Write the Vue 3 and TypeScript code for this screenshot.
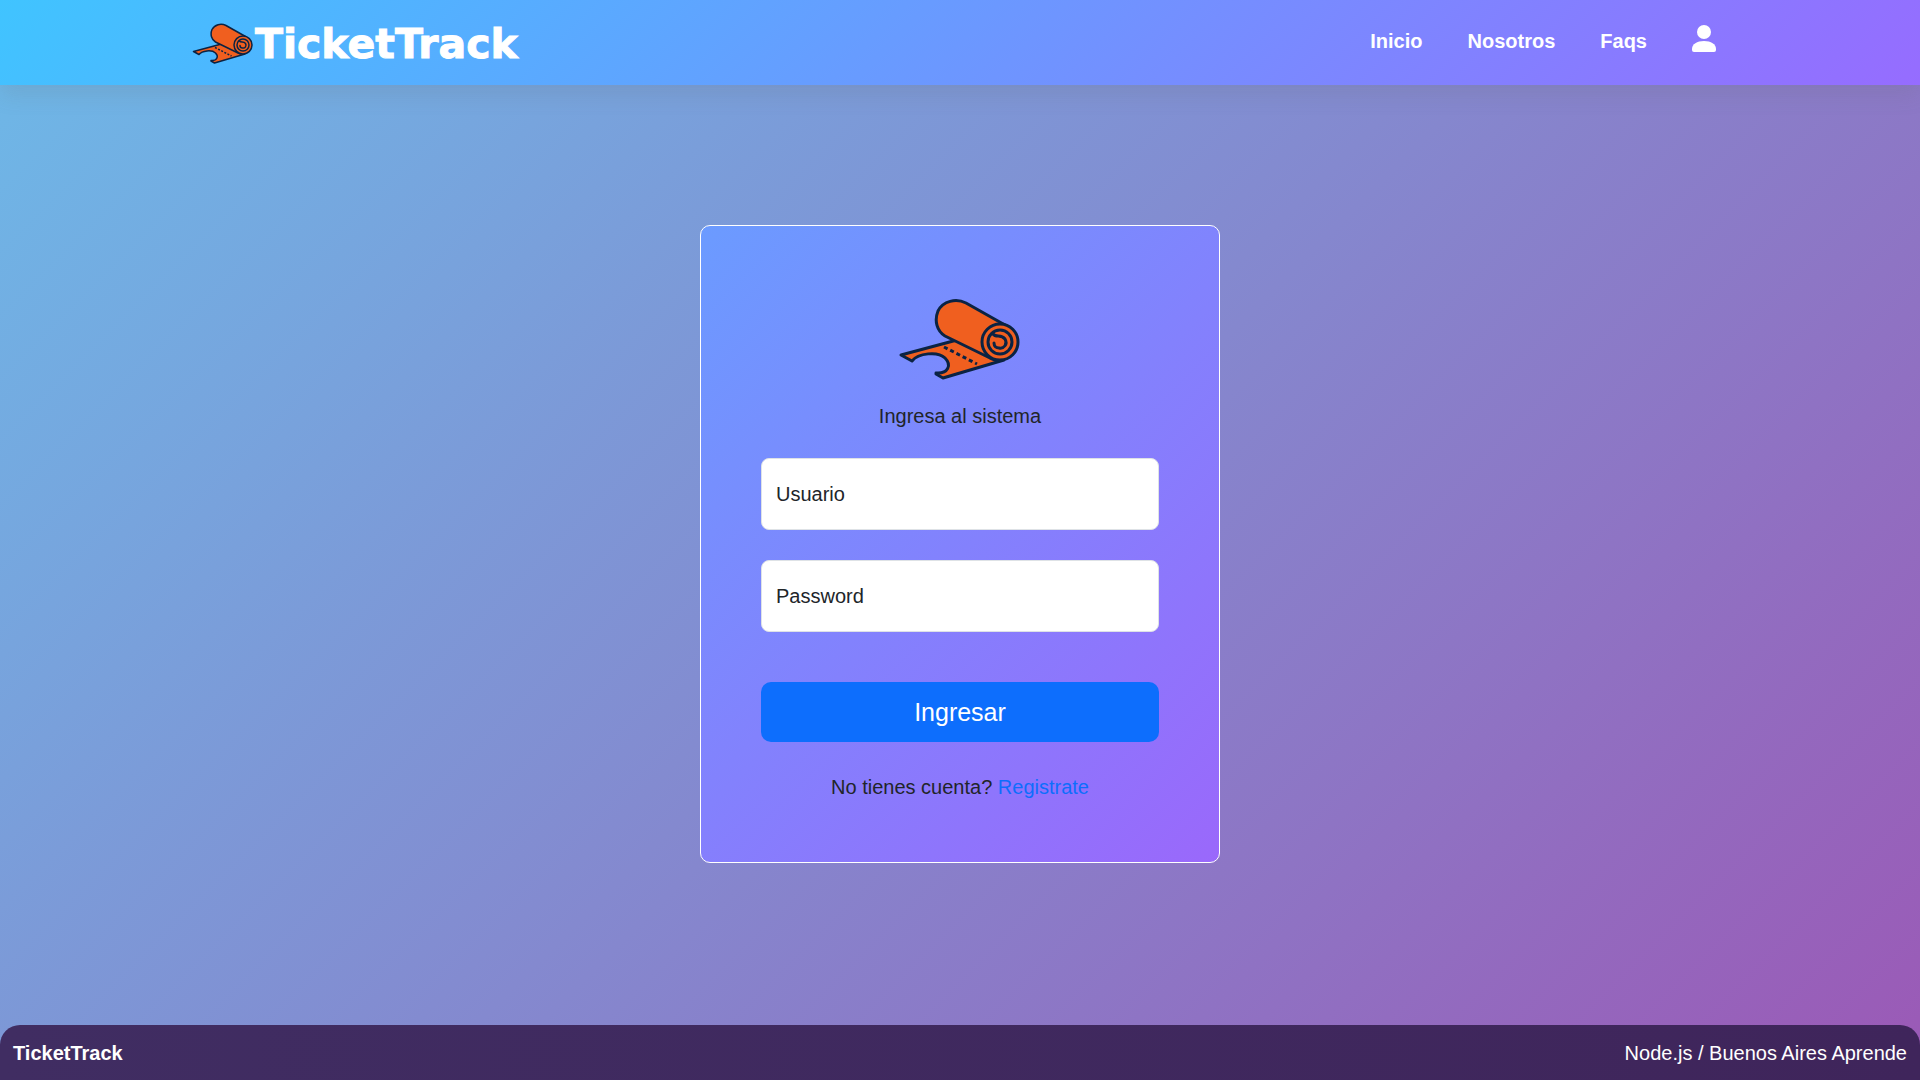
<script setup lang="ts">
import { ref } from 'vue'

interface NavLink {
  label: string
  href: string
}

interface Field {
  id: string
  label: string
  type: string
  autocomplete: string
}

const brand = 'TicketTrack'
const links: NavLink[] = [
  { label: 'Inicio', href: '#inicio' },
  { label: 'Nosotros', href: '#nosotros' },
  { label: 'Faqs', href: '#faqs' },
]
const fields: Field[] = [
  { id: 'usuario', label: 'Usuario', type: 'text', autocomplete: 'username' },
  { id: 'password', label: 'Password', type: 'password', autocomplete: 'current-password' },
]
const values = ref<Record<string, string>>({ usuario: '', password: '' })
</script>

<template>
  <div class="page">
    <svg class="symbols" aria-hidden="true">
      <symbol id="ticket-roll" viewBox="0 0 124 82">
        <g fill="#f05f1f" stroke="#0b2343" stroke-width="3" stroke-linejoin="round" stroke-linecap="round">
          <path d="M59 42 L3 57 L14 63 C20 55 40 53 47 60 C54 67 50 76 38 75 L38 76 L45 80 L106 62 Z" />
          <path d="M107 27 L68 5 C58 0 45 3 40 13 C36 23 39 33 47 38 L92 60 L97 62 Z" />
          <circle cx="102" cy="44" r="18" />
          <circle cx="102" cy="44" r="12" />
          <path fill="none" d="M95 36 C98 40 103 36 107 41 C110 46 106 51 101 50 C98 50 96 48 96 45" />
          <path fill="none" stroke-linecap="butt" stroke-dasharray="4 3" d="M46 49 L79 66" />
        </g>
      </symbol>
    </svg>

    <header class="topbar">
      <a class="brand" href="#inicio">
        <svg class="brand-mark" viewBox="0 0 124 82" aria-hidden="true"><use href="#ticket-roll" /></svg>
        <span>{{ brand }}</span>
      </a>
      <nav class="nav">
        <a v-for="link in links" :key="link.label" :href="link.href">{{ link.label }}</a>
        <a class="account" href="#cuenta" aria-label="Cuenta">
          <svg viewBox="0 0 24 28" aria-hidden="true">
            <circle cx="12" cy="7" r="7" />
            <path d="M0 24 C0 19 5 16 12 16 C19 16 24 19 24 24 V25 Q24 27 22 27 H2 Q0 27 0 25 Z" />
          </svg>
        </a>
      </nav>
    </header>

    <main class="content">
      <form class="card" @submit.prevent>
        <svg class="card-mark" viewBox="0 0 124 82" aria-hidden="true"><use href="#ticket-roll" /></svg>
        <p class="intro">Ingresa al sistema</p>
        <div v-for="field in fields" :key="field.id" class="field">
          <input
            :id="field.id"
            v-model="values[field.id]"
            :type="field.type"
            :autocomplete="field.autocomplete"
            placeholder=" "
          />
          <label :for="field.id">{{ field.label }}</label>
        </div>
        <button type="submit">Ingresar</button>
        <p class="signup">No tienes cuenta? <a href="#registro">Registrate</a></p>
      </form>
    </main>

    <footer class="footer">
      <strong>{{ brand }}</strong>
      <span>Node.js / Buenos Aires Aprende</span>
    </footer>
  </div>
</template>

<style>
body {
  margin: 0;
}
</style>

<style scoped>
* {
  box-sizing: border-box;
}

.page {
  display: flex;
  flex-direction: column;
  min-height: 100vh;
  background: linear-gradient(135deg, #6db9e8, #9b59b6);
  color: #212529;
  font: 20px/30px "Liberation Sans", Arial, sans-serif;
}

.symbols {
  position: absolute;
  width: 0;
  height: 0;
}

a {
  text-decoration: none;
}

.topbar {
  display: flex;
  align-items: center;
  justify-content: space-between;
  height: 85px;
  padding: 0 204px 0 10%;
  background: linear-gradient(135deg, #40c4ff, #6b98ff 50%, #966cff);
  box-shadow: 0 10px 20px rgba(100, 100, 100, 0.15);
}

.brand {
  display: flex;
  align-items: center;
  gap: 1px;
  padding-top: 2px;
  color: #fff;
  font: 700 41px/60px "Arial Black", "DejaVu Sans", sans-serif;
  -webkit-text-stroke: 1px #fff;
}

.brand-mark {
  width: 62px;
  height: 41px;
}

.nav {
  display: flex;
  align-items: center;
  gap: 45px;
  padding-bottom: 3px;
}

.nav a {
  color: #fff;
  font-weight: 700;
}

.nav .account {
  padding-bottom: 4px;
}

.account svg {
  display: block;
  width: 24px;
  height: 28px;
  fill: #fff;
}

.content {
  display: flex;
  flex: 1;
  align-items: center;
  justify-content: center;
  padding-bottom: 22px;
}

.card {
  display: flex;
  flex-direction: column;
  width: 520px;
  max-width: 100%;
  padding: 72px 60px 60px;
  border: 1px solid #fff;
  border-radius: 10px;
  background: linear-gradient(135deg, #6b9bff, #9a68fb);
}

.card-mark {
  align-self: center;
  width: 124px;
  height: 82px;
}

.intro {
  margin: 21px 0 27px;
  text-align: center;
}

.field {
  position: relative;
  margin-bottom: 30px;
}

.field input {
  display: block;
  width: 100%;
  height: 72px;
  padding: 30px 15px 10px;
  border: 1px solid #dee2e6;
  border-radius: 8px;
  background: #fff;
  color: inherit;
  font: inherit;
}

.field label {
  position: absolute;
  top: 21px;
  left: 15px;
  pointer-events: none;
}

.field input:focus + label,
.field input:not(:placeholder-shown) + label {
  top: 4px;
  font-size: 16px;
}

button {
  height: 60px;
  margin-top: 20px;
  border: 0;
  border-radius: 10px;
  background: #0d6efd;
  color: #fff;
  font: 25px/38px "Liberation Sans", Arial, sans-serif;
  cursor: pointer;
}

.signup {
  margin: 30px 0 0;
  text-align: center;
}

.signup a {
  color: #0d6efd;
}

.footer {
  display: flex;
  align-items: center;
  justify-content: space-between;
  height: 55px;
  padding: 0 13px;
  border-radius: 20px 20px 0 0;
  background: linear-gradient(90deg, #402d62, #3f255b);
  color: #fff;
}
</style>
